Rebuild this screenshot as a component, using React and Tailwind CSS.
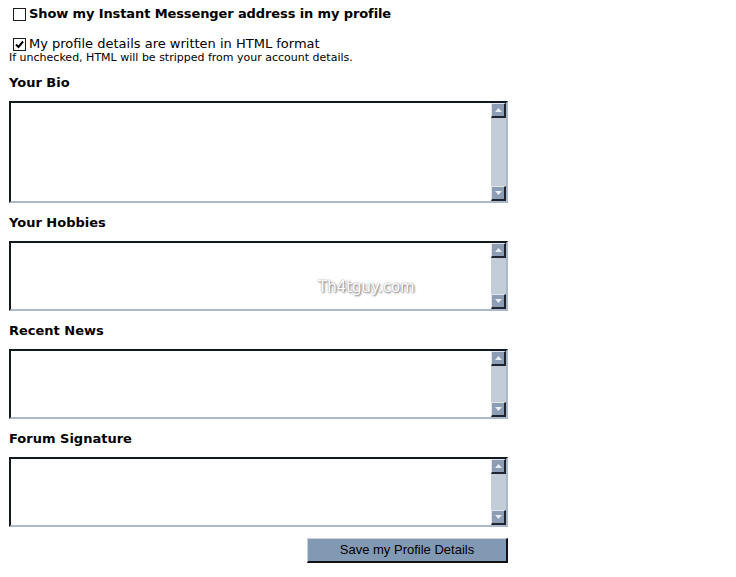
import React from 'react'

const verdana = { fontFamily: '"DejaVu Sans", Verdana, sans-serif' }

function Checkbox({ checked }) {
  return (
    <span className="inline-flex h-[13px] w-[13px] shrink-0 items-center justify-center border border-[#1c1c1c] bg-white">
      {checked && (
        <svg width="9" height="9" viewBox="0 0 9 9">
          <path d="M1 4.5 L3.5 7 L8 1.5" fill="none" stroke="#000" strokeWidth="2" />
        </svg>
      )}
    </span>
  )
}

function ArrowButton({ dir }) {
  return (
    <div className="flex h-[15px] w-[15px] items-center justify-center border-t border-l border-[#dfe6ee] border-b-2 border-r-2 border-b-[#1e2430] border-r-[#1e2430] bg-[#8c9db4]">
      <svg width="7" height="4" viewBox="0 0 7 4">
        {dir === 'up' ? <path d="M0 4 L3.5 0 L7 4 Z" fill="#e8eef5" /> : <path d="M0 0 L3.5 4 L7 0 Z" fill="#e8eef5" />}
      </svg>
    </div>
  )
}

function TextBox({ height }) {
  return (
    <div
      className="flex w-[499px] border-t-2 border-l-2 border-t-[#141820] border-l-[#141820] border-b-2 border-r-2 border-b-[#a9b8cb] border-r-[#a9b8cb] bg-white"
      style={{ height }}
    >
      <div className="flex-1" />
      <div className="flex w-[15px] flex-col justify-between bg-[#c2cdd9]">
        <ArrowButton dir="up" />
        <ArrowButton dir="down" />
      </div>
    </div>
  )
}

function Label({ children }) {
  return <div className="pl-[9px] text-[13px] font-bold leading-[14px] text-black" style={verdana}>{children}</div>
}

export default function App() {
  return (
    <div className="relative h-[577px] w-[736px] bg-white">
      <div className="flex flex-col pt-[6px]">
        <div className="flex items-center gap-[3px] pl-[13px]">
          <Checkbox />
          <span className="text-[13px] font-bold leading-[16px] tracking-[-0.11px] text-black" style={verdana}>
            Show my Instant Messenger address in my profile
          </span>
        </div>
        <div className="mt-[14px] flex items-center gap-[3px] pl-[13px]">
          <Checkbox checked />
          <span className="text-[13px] leading-[16px] text-black" style={verdana}>
            My profile details are written in HTML format
          </span>
        </div>
        <div className="pl-[9px] text-[11px] leading-[12px] text-black" style={verdana}>
          If unchecked, HTML will be stripped from your account details.
        </div>

        <div className="mt-[12px]"><Label>Your Bio</Label></div>
        <div className="mt-[11px] pl-[9px]"><TextBox height={102} /></div>

        <div className="mt-[13px]"><Label>Your Hobbies</Label></div>
        <div className="mt-[11px] pl-[9px]"><TextBox height={70} /></div>

        <div className="mt-[13px]"><Label>Recent News</Label></div>
        <div className="mt-[11px] pl-[9px]"><TextBox height={70} /></div>

        <div className="mt-[13px]"><Label>Forum Signature</Label></div>
        <div className="mt-[11px] pl-[9px]"><TextBox height={70} /></div>

        <div className="mt-[11px] flex w-[508px] justify-end">
          <button
            className="h-[25px] w-[201px] border-t border-l border-t-[#c9d4e0] border-l-[#c9d4e0] border-b-2 border-r-2 border-b-[#111] border-r-[#111] bg-[#8299b3] text-[13px] leading-[20px] text-black"
            style={{ fontFamily: '"Liberation Sans", Arial, sans-serif' }}
          >
            Save my Profile Details
          </button>
        </div>
      </div>

      <div
        className="absolute left-[318px] top-[279px] text-[15px] leading-[17px] text-white"
        style={{ fontFamily: '"DejaVu Sans", Verdana, sans-serif', textShadow: '1px 1px 2px #777, 0 0 2px #999' }}
      >
        Th4tguy.com
      </div>
    </div>
  )
}
